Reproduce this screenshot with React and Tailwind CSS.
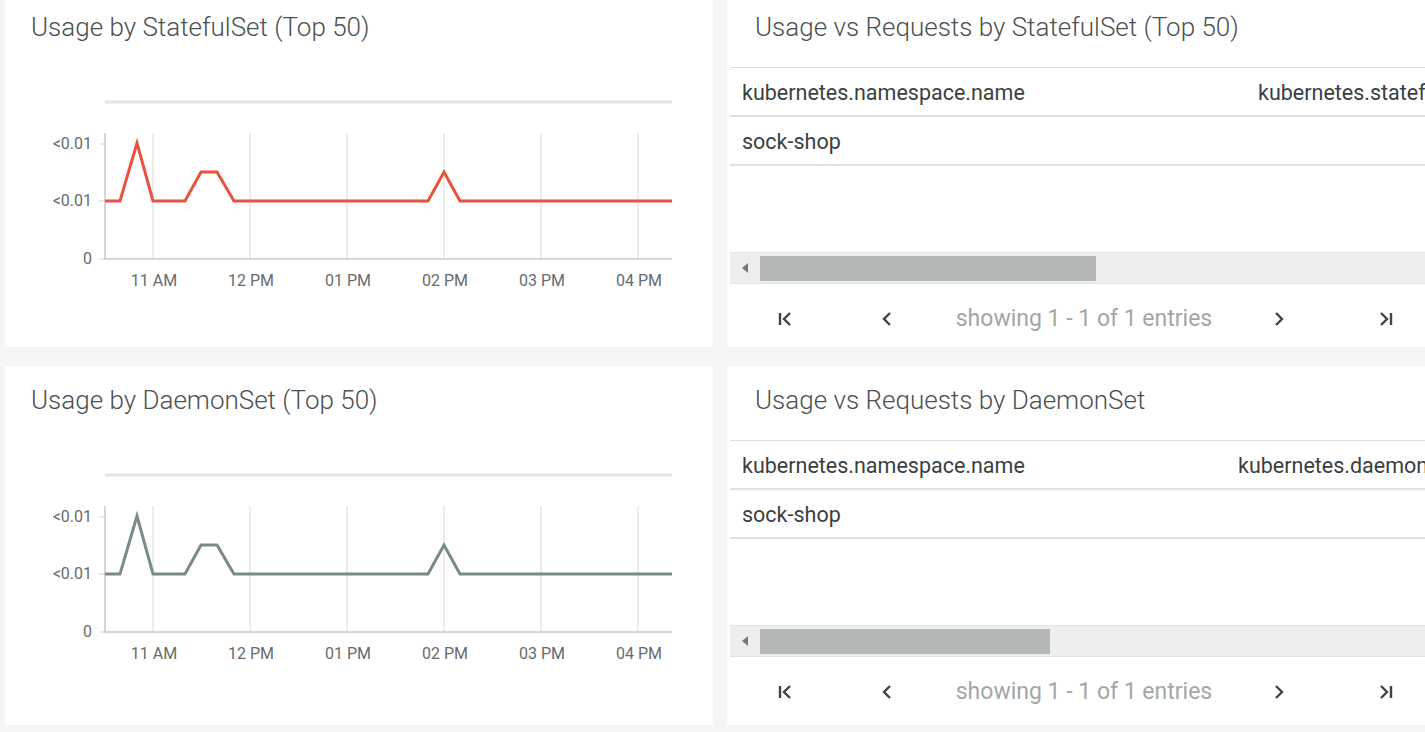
// Kubernetes workload usage dashboard - StatefulSet / DaemonSet panels
const GRID_X = [148, 245, 342, 439, 536, 633];
const X_LABELS = ['11 AM', '12 PM', '01 PM', '02 PM', '03 PM', '04 PM'];
const POINTS = [
  [100, 208], [115, 208], [132, 150], [148, 208], [180, 208], [196, 179],
  [212, 179], [229, 208], [423, 208], [439, 179], [455, 208], [667, 208],
];

const UsageChart = ({ title, color }) => {
  const ticks = [
    { y: 151, label: '<0.01' },
    { y: 208, label: '<0.01' },
    { y: 266, label: '0' },
  ];

  return (
    <div className="relative h-full bg-white">
      <div className="pl-[26px] pt-[18px] text-[26px] font-light leading-[32px] text-[#4b5050]">{title}</div>
      <svg className="absolute left-0 top-0" width="708" height="330" style={{ fontFamily: 'Roboto, sans-serif' }}>
        <line x1="100" y1="109" x2="667" y2="109" stroke="#e4e4e4" strokeWidth="3" />
        {GRID_X.map((x) => (
          <line key={x} x1={x} y1="140" x2={x} y2="266" stroke="#e6e6e6" strokeWidth="1.5" />
        ))}
        <line x1="100" y1="140" x2="100" y2="267" stroke="#c9c9c9" strokeWidth="1.5" />
        <line x1="100" y1="266" x2="667" y2="266" stroke="#c9c9c9" strokeWidth="1.5" />
        {ticks.map((t, i) => (
          <g key={i}>
            <line x1="94" y1={t.y} x2="100" y2={t.y} stroke="#d0d0d0" strokeWidth="1" />
            <text x="87" y={t.y + 5} textAnchor="end" fontSize="16" fill="#666c6c">{t.label}</text>
          </g>
        ))}
        {GRID_X.map((x, i) => (
          <text key={x} x={x + 1} y="293" textAnchor="middle" fontSize="16" fill="#666c6c">{X_LABELS[i]}</text>
        ))}
        <polyline
          points={POINTS.map((p) => p.join(',')).join(' ')}
          fill="none"
          stroke={color}
          strokeWidth="3"
          strokeLinejoin="miter"
        />
      </svg>
    </div>
  );
};

const FirstIcon = () => (
  <svg width="18" height="18" viewBox="0 0 18 18" fill="none" stroke="#3c4646" strokeWidth="2.4">
    <line x1="3" y1="3" x2="3" y2="15" />
    <polyline points="13,3 7,9 13,15" />
  </svg>
);
const PrevIcon = () => (
  <svg width="12" height="18" viewBox="0 0 12 18" fill="none" stroke="#3c4646" strokeWidth="2.4">
    <polyline points="9,3 3,9 9,15" />
  </svg>
);
const NextIcon = () => (
  <svg width="12" height="18" viewBox="0 0 12 18" fill="none" stroke="#3c4646" strokeWidth="2.4">
    <polyline points="3,3 9,9 3,15" />
  </svg>
);
const LastIcon = () => (
  <svg width="18" height="18" viewBox="0 0 18 18" fill="none" stroke="#3c4646" strokeWidth="2.4">
    <polyline points="5,3 11,9 5,15" />
    <line x1="15" y1="3" x2="15" y2="15" />
  </svg>
);

const UsageTable = ({ title, secondCol, secondX, thumbWidth }) => (
  <div className="flex h-full flex-col overflow-hidden bg-white">
    <div className="h-[74px] shrink-0 pl-[28px] pt-[18px] text-[26px] font-light leading-[32px] text-[#4b5050]">{title}</div>
    <div className="ml-[3px] shrink-0 border-t border-[#dcdcdc]">
      <div className="flex h-[49px] items-center border-b-2 border-[#e0e0e0] pt-[4px] text-[21.5px] text-[#3a3f3f]">
        <div className="shrink-0 pl-[12px]" style={{ width: secondX }}>kubernetes.namespace.name</div>
        <div className="shrink-0 whitespace-nowrap">{secondCol}</div>
      </div>
      <div className="flex h-[49px] items-center border-b-2 border-[#e0e0e0] pl-[12px] pt-[4px] text-[21.5px] text-[#3a3f3f]">
        sock-shop
      </div>
      <div className="h-[86px]" />
      <div className="flex h-[32px] items-center border-y border-[#e2e2e2] bg-[#eeeeee]">
        <div className="flex w-[30px] shrink-0 justify-center">
          <svg width="8" height="12" viewBox="0 0 8 12"><polygon points="7,1 1,6 7,11" fill="#6f7b7b" /></svg>
        </div>
        <div className="h-[25px] shrink-0 bg-[#b3b7b7]" style={{ width: thumbWidth }} />
        <div className="flex-1" />
        <div className="mr-[3px] h-[10px] w-[3px] bg-[#555]" />
      </div>
    </div>
    <div className="flex h-[70px] shrink-0 items-center">
      <div className="flex w-[112px] shrink-0 justify-center pl-[6px]"><FirstIcon /></div>
      <div className="flex w-[96px] shrink-0 justify-center"><PrevIcon /></div>
      <div className="w-[298px] shrink-0 whitespace-nowrap text-center text-[23px] text-[#a3a6a6]">showing 1 - 1 of 1 entries</div>
      <div className="flex w-[92px] shrink-0 justify-center"><NextIcon /></div>
      <div className="flex w-[120px] shrink-0 justify-center"><LastIcon /></div>
    </div>
  </div>
);

export default function App() {
  return (
    <div className="h-[732px] w-[1425px] overflow-hidden bg-[#f5f5f5]" style={{ fontFamily: 'Roboto, "Noto Sans", sans-serif' }}>
      <div className="-mt-[7px] grid w-[1445px] grid-cols-[708px_1fr] grid-rows-[354px_359px] gap-x-[14px] gap-y-[19px] pl-[5px]">
        <UsageChart title="Usage by StatefulSet (Top 50)" color="#e8533f" />
        <UsageTable
          title="Usage vs Requests by StatefulSet (Top 50)"
          secondCol="kubernetes.statefulset.name"
          secondX={528}
          thumbWidth={336}
        />
        <UsageChart title="Usage by DaemonSet (Top 50)" color="#788a8a" />
        <UsageTable
          title="Usage vs Requests by DaemonSet"
          secondCol="kubernetes.daemonset.name"
          secondX={508}
          thumbWidth={290}
        />
      </div>
    </div>
  );
}
